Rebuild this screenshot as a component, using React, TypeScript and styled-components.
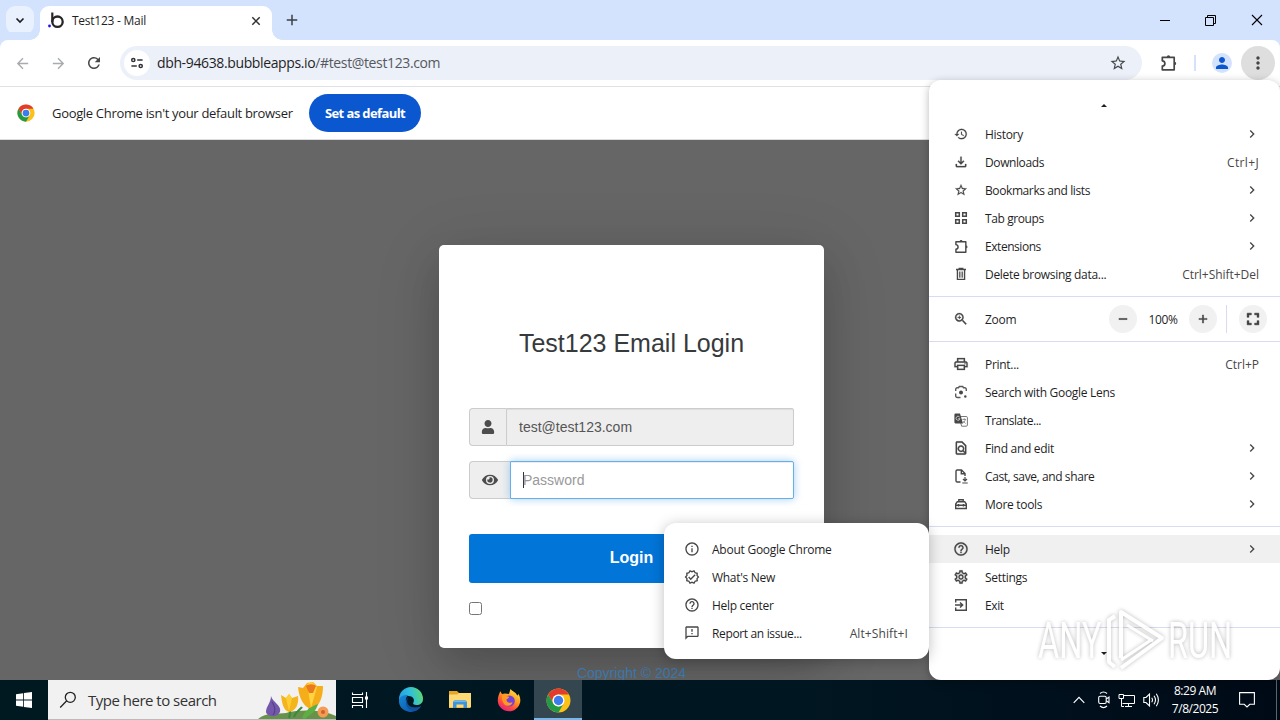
import type { ReactNode } from 'react';
import styled, { createGlobalStyle } from 'styled-components';
import {
    MdAdd,
    MdArrowBack,
    MdArrowForward,
    MdChevronRight,
    MdFullscreen,
    MdHelpOutline,
    MdHistory,
    MdInfoOutline,
    MdMoreVert,
    MdOutlineFeedback,
    MdOutlineFileDownload,
    MdOutlineFindInPage,
    MdOutlinePrint,
    MdOutlineSettings,
    MdOutlineVerified,
    MdPerson,
    MdRefresh,
    MdRemove,
    MdStarBorder,
    MdZoomIn,
} from 'react-icons/md';
import { FaEye, FaUser } from 'react-icons/fa';

type MenuEntry = {
    icon: ReactNode;
    label: string;
    hint?: string;
    sub?: boolean;
    active?: boolean;
    fit?: number;
    hintFit?: number;
};

const ChromeLogo = ({ size }: { size: number }) => (
    <svg width={size} height={size} viewBox='0 0 48 48'>
        <circle cx='24' cy='24' r='23' fill='#fbc116' />
        <path d='M4.1 12.5A23 23 0 0 1 43.9 12.5H24A11.5 11.5 0 0 0 14 29.8Z' fill='#e33b2e' />
        <path d='M4.1 12.5A23 23 0 0 0 24 47L34 29.8A11.5 11.5 0 0 1 14 29.8Z' fill='#229a4c' />
        <circle cx='24' cy='24' r='11.5' fill='#fff' />
        <circle cx='24' cy='24' r='9' fill='#3b7ded' />
    </svg>
);

const BubbleLogo = () => (
    <svg width='17' height='17' viewBox='0 0 17 17'>
        <path d='M4.3 .5V10' stroke='#262626' strokeWidth='2.2' />
        <circle cx='9.5' cy='9.7' r='5.2' fill='none' stroke='#262626' strokeWidth='2.3' />
        <circle cx='1.5' cy='14' r='1.4' fill='#1b12f5' />
    </svg>
);

const SiteInfoIcon = () => (
    <svg width='14' height='14' viewBox='0 0 14 14' fill='none' stroke='#303236' strokeWidth='1.5'>
        <circle cx='3.3' cy='4' r='1.6' />
        <path d='M7.2 4H12.6M1.4 10H6.8' />
        <circle cx='10.7' cy='10' r='1.6' />
    </svg>
);

const GroupsIcon = () => (
    <svg width='14' height='14' viewBox='0 0 14 14' fill='none' stroke='#474747' strokeWidth='1.5'>
        <path d='M1.7 1.7H5.3V5.3H1.7ZM8.7 1.7H12.3V5.3H8.7ZM1.7 8.7H5.3V12.3H1.7ZM8.7 8.7H12.3V12.3H8.7Z' />
    </svg>
);

const LensIcon = () => (
    <svg width='14' height='14' viewBox='0 0 14 14' fill='none' stroke='#5a5a5a' strokeWidth='1.4'>
        <path d='M1.7 6V4.2A1.5 1.5 0 0 1 3.2 2.7H4.5L5.3 1.5H8.7L9.5 2.7H10.8A1.5 1.5 0 0 1 12.3 4.2V6' />
        <path d='M1.7 8.5V11A1.5 1.5 0 0 0 3.2 12.5H6.5' />
        <circle cx='7' cy='7.5' r='2' fill='#474747' stroke='none' />
        <circle cx='11.3' cy='11.5' r='1.2' fill='#474747' stroke='none' />
    </svg>
);

const TranslateIcon = () => (
    <svg width='14' height='14' viewBox='0 0 14 14' fill='none'>
        <path d='M5 3.5H12.2A1.2 1.2 0 0 1 13.4 4.7V12A1.2 1.2 0 0 1 12.2 13.2H7.6Z' stroke='#777' />
        <path d='M1.5 .6H6L9 10.4H1.5A1.1 1.1 0 0 1 .4 9.3V1.7A1.1 1.1 0 0 1 1.5 .6Z' fill='#474747' />
        <path d='M5.6 4A2 2 0 1 0 6 5.7H4.2' stroke='#ccc' strokeWidth='.9' />
        <path d='M8.3 6.4H12M10.3 5.4V6.4M11.3 6.4C11 8.3 10 9.2 9 10M9.3 8L11.5 10.5' stroke='#777' strokeWidth='.8' />
    </svg>
);

const CastSaveIcon = () => (
    <svg width='14' height='15' viewBox='0 0 14 15' fill='none' stroke='#474747' strokeWidth='1.4'>
        <path d='M6.5 13H3.2A1.2 1.2 0 0 1 2 11.8V2.2A1.2 1.2 0 0 1 3.2 1H7.5L11 4.5V7M7.3 1V4.7H11' />
        <path d='M11 8V11.5M9 10L11 12L13 10M8.3 14H13.7' strokeWidth='1.2' />
    </svg>
);

const ToolboxIcon = () => (
    <svg width='14' height='14' viewBox='0 0 14 14' fill='none' stroke='#474747' strokeWidth='1.4'>
        <path d='M1.7 11.5V7L3.3 4.7H10.7L12.3 7V11.5ZM4.8 4.5V2.7H9.2V4.5M1.7 8.3H12.3M4.5 7V9.6M9.5 7V9.6' />
    </svg>
);

const TrashIcon = () => (
    <svg width='14' height='14' viewBox='0 0 14 14' fill='none' stroke='#474747' strokeWidth='1.3'>
        <path d='M2 2.5H12M5.2 2V1.3H8.8V2M3.4 2.8V12.3H10.6V2.8' />
        <path d='M5.4 4.5V10.7M7 4.5V10.7M8.6 4.5V10.7' strokeWidth='.9' />
    </svg>
);

const ExitIcon = () => (
    <svg width='14' height='14' viewBox='0 0 14 14' fill='none' stroke='#474747' strokeWidth='1.4'>
        <path d='M1.7 4.5V1.7H12.3V12.3H1.7V9.5M1 7H8.5M6 4.4L8.7 7L6 9.6' />
    </svg>
);

const PuzzleIcon = ({ size }: { size: number }) => (
    <svg width={size} height={size} viewBox='0 0 18 18' fill='none' stroke='#474747' strokeWidth='1.7'>
        <path d='M2.3 3.3H14.2V15.8H2.3V12.2C4.2 12 4.9 10.8 4.9 9.5S4.2 7 2.3 6.8Z' strokeLinejoin='round' />
        <path d='M6.8 3A1.7 1.7 0 0 1 10.2 3ZM14.5 7.8A1.7 1.7 0 0 1 14.5 11.2Z' fill='#474747' stroke='none' />
    </svg>
);

const Watermark = () => (
    <WatermarkBox>
        <WatermarkWord>ANY</WatermarkWord>
        <svg width='62' height='66' viewBox='0 0 62 66' fill='none' stroke='#fff' strokeWidth='4' strokeLinejoin='round'>
            <path d='M17 50V4L58 30L17 60M11 8L5 12V54L11 59' />
            <path d='M23 17L49 33M47 32L17 52' strokeWidth='3' />
        </svg>
        <WatermarkWord>RUN</WatermarkWord>
    </WatermarkBox>
);

const EdgeIcon = () => (
    <svg width='26' height='26' viewBox='0 0 26 26'>
        <defs>
            <linearGradient id='edgeTop' x1='0' x2='1' y1='.5' y2='.3'>
                <stop offset='0' stopColor='#269fdf' />
                <stop offset='.5' stopColor='#31bfdc' />
                <stop offset='1' stopColor='#60d968' />
            </linearGradient>
            <linearGradient id='edgeLow' x1='0' x2='1' y1='0' y2='1'>
                <stop offset='0' stopColor='#1689d8' />
                <stop offset='1' stopColor='#0a4d9b' />
            </linearGradient>
        </defs>
        <path d='M1 12A12 12 0 0 1 25 12C25 16 22 18 18.5 18C15.5 18 14.5 16.7 15.5 15.3C17 12 14.5 9 10.5 9C6 9 2.5 11 1 15Z' fill='url(#edgeTop)' />
        <path d='M1 13C1.5 9.5 6 7.5 10.5 8C7.5 10 7 14.5 9.5 17.5C12.5 21.5 18 21.7 23 19.3C20 24 15 25.7 10.5 24.7C4.5 23.5 .5 19 1 13Z' fill='url(#edgeLow)' />
        <path d='M11 9.5C8.5 12 8.5 16 11 18.5C14 21 19 21 23 19.3C22 21 20.5 22.5 19 23.3C14 24.5 9 22 8 17C7.5 14 8.5 11 11 9.5Z' fill='#0e509d' />
    </svg>
);

const FolderIcon = () => (
    <svg width='22' height='20' viewBox='0 0 22 20'>
        <path d='M0 1H8L10 3H21V18H0Z' fill='#eba526' />
        <path d='M0 4.5H8L10 3H22V17.5H0Z' fill='#ffd973' />
        <path d='M4 18V11.5H18V18H14.5V14.5H7.5V18Z' fill='#3d93dc' />
        <path d='M4 11.5L5.5 10H16.5L18 11.5Z' fill='#62b5ec' />
    </svg>
);

const FirefoxIcon = () => (
    <svg width='24' height='24' viewBox='0 0 24 24'>
        <defs>
            <linearGradient id='fox' x1='.8' x2='.2' y1='0' y2='1'>
                <stop offset='0' stopColor='#ffe84a' />
                <stop offset='.4' stopColor='#ff9c1f' />
                <stop offset='.7' stopColor='#ff4a3d' />
                <stop offset='1' stopColor='#e3178e' />
            </linearGradient>
        </defs>
        <path d='M3.2 3.2L5 6L8 5.5L12 6L13.5 1C15 3.2 18.5 4 20 7C21 8 21.4 7 21 5.5C23 8 23.6 11 23.2 14C22 20 17 23.4 12 23.3C6 23.2 1.2 19 .8 13C.6 9 2 6.5 3.2 3.2Z' fill='url(#fox)' />
        <circle cx='12.3' cy='13' r='5.5' fill='#7542d8' />
        <path d='M5 7.5C8 6.5 9.3 8.5 11.5 8.5C13 9 11 11 9.3 11.5C9.5 14.5 13 15.5 15.5 14.3C15 17.5 11.5 18.5 9 17.5C6 16 4.5 12 5 7.5Z' fill='#ff9825' />
    </svg>
);

const Flowers = () => (
    <svg width='78' height='39' viewBox='0 0 78 39'>
        <path d='M0 39C8 32 20 34 28 33C44 29 65 30 78 36V39Z' fill='#68924c' />
        <path d='M31 38C33 33 32 29 31 25M49 37C53 30 52 26 52 21M36 37C38 31 42 30 44 27' stroke='#3c8a3d' strokeWidth='2.2' fill='none' />
        <path d='M13 16C14 22 24 25 22 32C19 38 9 37 8 32C8 26 13 23 13 16Z' fill='#7357ab' />
        <path d='M14 22C17 27 18 31 15 35' stroke='#4f3982' fill='none' />
        <path d='M23 15L28 18L31 14L34 18L40 16C41 24 38 31 31 32C25 30 24 23 23 15Z' fill='#f4b51c' />
        <path d='M28 18L31 31L34 18L31 14Z' fill='#ffce35' />
        <path d='M40 7L45 8L49 3L55 2L59 6L65 6C65 18 61 27 54 29C46 28 41 18 40 7Z' fill='#f5ad19' />
        <path d='M49 4L53 28L59 7L54 2Z' fill='#ffd43e' />
        <path d='M48 6A6 4 0 0 1 58 6L55 13H51Z' fill='#eb791d' />
        <circle cx='65' cy='32' r='5.5' fill='#f59b55' />
        <circle cx='65' cy='32' r='2' fill='#cb6428' />
        <path d='M44 38C47 29 55 26 60 24C58 32 52 35 47 39Z' fill='#5eae43' />
    </svg>
);

const historyItems: MenuEntry[] = [
    { icon: <MdHistory size={14} />, label: 'History', sub: true },
    { icon: <MdOutlineFileDownload size={16} />, label: 'Downloads', hint: 'Ctrl+J', fit: -0.4, hintFit: 0.35 },
    { icon: <MdStarBorder size={14} />, label: 'Bookmarks and lists', sub: true, fit: -0.4 },
    { icon: <GroupsIcon />, label: 'Tab groups', sub: true, fit: -0.4 },
    { icon: <PuzzleIcon size={15} />, label: 'Extensions', sub: true, fit: -0.45 },
    { icon: <TrashIcon />, label: 'Delete browsing data...', hint: 'Ctrl+Shift+Del', hintFit: -0.03 },
];

const toolItems: MenuEntry[] = [
    { icon: <MdOutlinePrint size={16} />, label: 'Print...', hint: 'Ctrl+P', hintFit: 0 },
    { icon: <LensIcon />, label: 'Search with Google Lens' },
    { icon: <TranslateIcon />, label: 'Translate...', fit: -0.45 },
    { icon: <MdOutlineFindInPage size={16} />, label: 'Find and edit', sub: true },
    { icon: <CastSaveIcon />, label: 'Cast, save, and share', sub: true, fit: -0.4 },
    { icon: <ToolboxIcon />, label: 'More tools', sub: true },
];

const appItems: MenuEntry[] = [
    { icon: <MdHelpOutline size={16} />, label: 'Help', sub: true, active: true },
    { icon: <MdOutlineSettings size={16} />, label: 'Settings' },
    { icon: <ExitIcon />, label: 'Exit', fit: -0.4 },
];

const helpItems: MenuEntry[] = [
    { icon: <MdInfoOutline size={16} />, label: 'About Google Chrome', fit: -0.25 },
    { icon: <MdOutlineVerified size={16} />, label: "What's New" },
    { icon: <MdHelpOutline size={16} />, label: 'Help center' },
    { icon: <MdOutlineFeedback size={16} />, label: 'Report an issue...', hint: 'Alt+Shift+I', fit: -0.35, hintFit: 0.1 },
];

const MenuRows = ({ items }: { items: MenuEntry[] }) => (
    <>
        {items.map((item) => (
            <MenuRow key={item.label} $active={item.active}>
                <MenuIcon>{item.icon}</MenuIcon>
                <MenuLabel $fit={item.fit}>{item.label}</MenuLabel>
                {item.hint && <MenuHint $fit={item.hintFit}>{item.hint}</MenuHint>}
                {item.sub && <MenuArrow size={16} />}
            </MenuRow>
        ))}
    </>
);

const App = () => (
    <Screen>
        <GlobalStyle />
        <TabStrip>
            <TabSearch>
                <svg width='10' height='7' viewBox='0 0 10 7'>
                    <path d='M1.5 1.5L5 5L8.5 1.5' fill='none' stroke='#1f1f1f' strokeWidth='1.7' />
                </svg>
            </TabSearch>
            <Tab>
                <BubbleLogo />
                <TabTitle>Test123 - Mail</TabTitle>
                <svg width='10' height='10' viewBox='0 0 10 10'>
                    <path d='M1.3 1.3L8.7 8.7M8.7 1.3L1.3 8.7' stroke='#303030' strokeWidth='1.5' />
                </svg>
            </Tab>
            <NewTab>
                <MdAdd size={18} />
            </NewTab>
            <WindowControls>
                <svg width='11' height='11' viewBox='0 0 11 11'>
                    <path d='M1 5.5H11' stroke='#000' />
                </svg>
                <svg width='11' height='11' viewBox='0 0 11 11' fill='none' stroke='#000'>
                    <path d='M.5 2.5H8.5V10.5H.5ZM2.5 2.5V.5H10.5V8.5H8.5' />
                </svg>
                <svg width='12' height='12' viewBox='0 0 12 12'>
                    <path d='M1 1L11 11M11 1L1 11' stroke='#000' strokeWidth='1.1' />
                </svg>
            </WindowControls>
        </TabStrip>
        <Toolbar>
            <NavButton $dim><MdArrowBack size={17} /></NavButton>
            <NavButton $dim><MdArrowForward size={17} /></NavButton>
            <NavButton><MdRefresh size={18} /></NavButton>
            <AddressBar>
                <SiteInfo><SiteInfoIcon /></SiteInfo>
                <Url>dbh-94638.bubbleapps.io<span>/#test@test123.com</span></Url>
                <MdStarBorder size={18} />
            </AddressBar>
            <ToolbarEnd>
                <PuzzleIcon size={18} />
                <Divider />
                <Avatar><MdPerson size={18} /></Avatar>
                <MoreButton><MdMoreVert size={20} /></MoreButton>
            </ToolbarEnd>
        </Toolbar>
        <InfoBar>
            <ChromeLogo size={18} />
            <InfoText>Google Chrome isn't your default browser</InfoText>
            <DefaultButton>Set as default</DefaultButton>
        </InfoBar>
        <Page>
            <LoginCard>
                <LoginTitle>Test123 Email Login</LoginTitle>
                <InputGroup>
                    <Addon $width={37}><FaUser size={14} /></Addon>
                    <Field>test@test123.com</Field>
                </InputGroup>
                <InputGroup>
                    <Addon $width={41}><FaEye size={16} /></Addon>
                    <Field $focused><Caret />Password</Field>
                </InputGroup>
                <LoginButton>Login</LoginButton>
                <CheckBox />
            </LoginCard>
            <Copyright>Copyright © 2024</Copyright>
        </Page>
        <TaskBar>
            <StartButton>
                <svg width='16' height='16' viewBox='0 0 16 16' fill='#fff'>
                    <path d='M0 2.2L7.2 1.2V7.5H0ZM8 1.1L16 0V7.5H8ZM0 8.4H7.2V14.8L0 13.8ZM8 8.4H16V16L8 14.9Z' />
                </svg>
            </StartButton>
            <SearchBox>
                <svg width='18' height='18' viewBox='0 0 18 18' fill='none' stroke='#222' strokeWidth='1.3'>
                    <circle cx='11.3' cy='6.3' r='5' />
                    <path d='M7.7 9.8L1.2 16.5' />
                </svg>
                <SearchText>Type here to search</SearchText>
                <Flowers />
            </SearchBox>
            <TaskButton $gap={3}>
                <svg width='18' height='18' viewBox='0 0 18 18' fill='none' stroke='#fff' strokeWidth='1.1'>
                    <path d='M1.5 1.5V3.5H11.5V1.5M1.5 6.5H11.5V11.5H1.5ZM1.5 17V14.5H11.5V17M15.5 1V17' />
                    <path d='M14 5.5H17V8.5H14Z' fill='#fff' stroke='none' />
                </svg>
            </TaskButton>
            <TaskButton><EdgeIcon /></TaskButton>
            <TaskButton><FolderIcon /></TaskButton>
            <TaskButton><FirefoxIcon /></TaskButton>
            <TaskButton $active><ChromeLogo size={25} /></TaskButton>
            <Tray>
                <svg width='12' height='8' viewBox='0 0 12 8' fill='none' stroke='#fff' strokeWidth='1.2'>
                    <path d='M.7 6.8L6 1.4L11.3 6.8' />
                </svg>
                <TrayGroup>
                    <svg width='12' height='18' viewBox='0 0 12 18' fill='none' stroke='#fff' strokeWidth='1.1'>
                        <path d='M2 2.5C4 .8 7 .8 9 2.5M2 15C4 16.8 7 16.8 9 15' />
                        <rect x='.7' y='5.2' width='7.5' height='7.3' rx='1.4' />
                        <path d='M8.3 8L11 6V11.7L8.3 9.8' />
                    </svg>
                    <svg width='17' height='15' viewBox='0 0 17 15' fill='none' stroke='#fff'>
                        <path d='M5.5 2.5H16.5V10.5H4.5M10.5 10.5V13.5M7 13.5H14M1 1.5H5.5V5.5H1ZM3.5 5.5V13.5H6' />
                    </svg>
                    <svg width='17' height='16' viewBox='0 0 17 16' fill='none' stroke='#fff' strokeWidth='1.1'>
                        <path d='M.8 5.5H3L6.5 2V14L3 10.5H.8ZM8.7 5.8Q10.3 8 8.7 10.2M11 3.8Q14 8 11 12.2M13.3 1.8Q17.5 8 13.3 14.2' />
                    </svg>
                </TrayGroup>
            </Tray>
            <Clock>
                <span>8:29 AM</span>
                <span>7/8/2025</span>
            </Clock>
            <Notifications>
                <svg width='16' height='16' viewBox='0 0 16 16' fill='none' stroke='#fff' strokeWidth='1.1'>
                    <path d='M.6 .6H15.4V12.3H10.8L8 15L5.2 12.3H.6Z' />
                </svg>
            </Notifications>
        </TaskBar>

        <MainMenu>
            <ScrollHint $top>
                <svg width='6' height='3' viewBox='0 0 6 3'><path d='M0 3L3 0L6 3Z' fill='#1f1f1f' /></svg>
            </ScrollHint>
            <MenuRows items={historyItems} />
            <Separator />
            <MenuRow>
                <MenuIcon><MdZoomIn size={16} /></MenuIcon>
                <MenuLabel>Zoom</MenuLabel>
                <ZoomControls>
                    <RoundButton><MdRemove size={14} /></RoundButton>
                    <ZoomValue>100%</ZoomValue>
                    <RoundButton><MdAdd size={14} /></RoundButton>
                    <ZoomDivider />
                    <RoundButton><MdFullscreen size={20} /></RoundButton>
                </ZoomControls>
            </MenuRow>
            <Separator />
            <MenuRows items={toolItems} />
            <Separator />
            <MenuRows items={appItems} />
            <Separator />
            <ScrollHint>
                <svg width='6' height='3' viewBox='0 0 6 3'><path d='M0 0L3 3L6 0Z' fill='#1f1f1f' /></svg>
            </ScrollHint>
        </MainMenu>
        <HelpMenu>
            <MenuRows items={helpItems} />
        </HelpMenu>
        <Watermark />
    </Screen>
);

export default App;

const GlobalStyle = createGlobalStyle`
    * {
        box-sizing: border-box;
    }
    body {
        margin: 0;
        overflow: hidden;
    }
    svg {
        display: block;
        flex-shrink: 0;
    }
`;

const Screen = styled.div`
    position: relative;
    display: flex;
    flex-direction: column;
    width: 1280px;
    height: 720px;
    overflow: hidden;
    font-family: 'Open Sans', 'Noto Sans', sans-serif;
    font-size: 12px;
    color: #1f1f1f;
    white-space: nowrap;
`;

const TabStrip = styled.div`
    display: flex;
    height: 40px;
    flex-shrink: 0;
    padding: 6px 0 0 6px;
    background: #d3e2fd;
`;

const TabSearch = styled.div`
    display: flex;
    align-items: center;
    justify-content: center;
    width: 28px;
    height: 28px;
    border-radius: 9px;
    background: #e9f0fe;
`;

const Tab = styled.div`
    position: relative;
    display: flex;
    align-items: center;
    width: 232px;
    height: 34px;
    margin-left: 6px;
    padding: 0 11px 5px 8px;
    border-radius: 9px 9px 0 0;
    background: #fff;

    &::before,
    &::after {
        content: '';
        position: absolute;
        bottom: 0;
        width: 10px;
        height: 10px;
    }
    &::before {
        left: -10px;
        background: radial-gradient(circle at 0 0, transparent 9.5px, #fff 10px);
    }
    &::after {
        right: -10px;
        background: radial-gradient(circle at 100% 0, transparent 9.5px, #fff 10px);
    }
`;

const TabTitle = styled.span`
    flex: 1;
    margin-left: 7px;
    letter-spacing: -0.25px;
`;

const NewTab = styled.div`
    display: flex;
    align-items: center;
    height: 28px;
    margin-left: 11px;
    color: #3c4043;
`;

const WindowControls = styled.div`
    display: flex;
    align-items: center;
    gap: 35px;
    height: 28px;
    margin: 0 17px 0 auto;
`;

const Toolbar = styled.div`
    display: flex;
    align-items: center;
    height: 47px;
    flex-shrink: 0;
    padding: 0 5px 0 8px;
    border-bottom: 1px solid #dfe1e5;
    border-radius: 8px 8px 0 0;
    background: #fff;
    box-shadow: 0 -8px #d3e2fd;
`;

const NavButton = styled.div<{ $dim?: boolean }>`
    display: flex;
    align-items: center;
    justify-content: center;
    width: 28px;
    margin-right: 8px;
    color: ${({ $dim }) => ($dim ? '#a9abae' : '#46484b')};
`;

const AddressBar = styled.div`
    display: flex;
    align-items: center;
    flex: 1;
    height: 34px;
    margin-left: 4px;
    padding: 0 15px 0 4px;
    border-radius: 17px;
    background: #ecf0f9;
    color: #46484b;
`;

const SiteInfo = styled.div`
    display: flex;
    align-items: center;
    justify-content: center;
    width: 26px;
    height: 26px;
    border-radius: 50%;
    background: #fff;
`;

const Url = styled.div`
    flex: 1;
    margin-left: 7px;
    padding-bottom: 1px;
    font-size: 14px;
    letter-spacing: -0.37px;
    color: #1f1f1f;

    span {
        color: #55585d;
    }
`;

const ToolbarEnd = styled.div`
    display: flex;
    align-items: center;
    margin-left: 18px;
`;

const Divider = styled.div`
    width: 2px;
    height: 16px;
    margin: 0 16px;
    background: #d5e2f8;
`;

const Avatar = styled.div`
    display: flex;
    align-items: center;
    justify-content: center;
    width: 20px;
    height: 20px;
    border-radius: 50%;
    background: #d3e3fd;
    color: #0b57d0;
`;

const MoreButton = styled.div`
    display: flex;
    align-items: center;
    justify-content: center;
    width: 34px;
    height: 34px;
    margin-left: 9px;
    border-radius: 50%;
    background: #dedede;
    color: #444;
`;

const InfoBar = styled.div`
    display: flex;
    align-items: center;
    height: 53px;
    flex-shrink: 0;
    padding-left: 17px;
    border-bottom: 1px solid #dadce0;
    background: #fff;
`;

const InfoText = styled.span`
    width: 241px;
    margin-left: 17px;
    font-size: 13px;
    letter-spacing: -0.32px;
`;

const DefaultButton = styled.div`
    width: 112px;
    height: 38px;
    margin-left: 16px;
    border-radius: 19px;
    background: #0b57d0;
    color: #fff;
    font-size: 13px;
    font-weight: 700;
    line-height: 38px;
    text-align: center;
    letter-spacing: -0.6px;
`;

const Page = styled.div`
    flex: 1;
    min-height: 0;
    overflow: hidden;
    background: #666;
    font-family: 'Liberation Sans', Arial, sans-serif;
`;

const LoginCard = styled.div`
    display: flex;
    flex-direction: column;
    width: 385px;
    height: 403px;
    margin: 105px 0 0 439px;
    padding: 84px 30px 0;
    border-radius: 5px;
    background: #fff;
    box-shadow: 0 19px 38px rgba(0, 0, 0, 0.15), 0 10px 70px rgba(0, 0, 0, 0.12);
`;

const LoginTitle = styled.div`
    height: 79px;
    font-size: 25px;
    line-height: 29px;
    text-align: center;
    color: #373a3c;
`;

const InputGroup = styled.div`
    display: flex;
    height: 38px;
    margin-bottom: 15px;
`;

const Addon = styled.div<{ $width: number }>`
    display: flex;
    align-items: center;
    justify-content: center;
    width: ${({ $width }) => $width}px;
    border: 1px solid #ccc;
    border-right: 0;
    border-radius: 4px 0 0 4px;
    background: #eee;
    color: #4d4d4d;
`;

const Field = styled.div<{ $focused?: boolean }>`
    display: flex;
    align-items: center;
    flex: 1;
    padding-left: 12px;
    border: 1px solid ${({ $focused }) => ($focused ? '#66afe9' : '#ccc')};
    border-radius: 0 2px 2px 0;
    background: ${({ $focused }) => ($focused ? '#fff' : '#eee')};
    box-shadow: ${({ $focused }) =>
        $focused
            ? 'inset 0 1px 1px rgba(0, 0, 0, 0.075), 0 0 8px rgba(102, 175, 233, 0.6)'
            : 'inset 0 1px 1px rgba(0, 0, 0, 0.075)'};
    font-size: 14px;
    color: ${({ $focused }) => ($focused ? '#999' : '#555')};
`;

const Caret = styled.span`
    width: 1px;
    height: 16px;
    margin-right: -1px;
    background: #333;
`;

const LoginButton = styled.div`
    height: 49px;
    margin-top: 20px;
    border-radius: 3px;
    background: #0275d8;
    color: #fff;
    font-size: 16px;
    font-weight: 700;
    line-height: 47px;
    text-align: center;
`;

const CheckBox = styled.div`
    width: 13px;
    height: 13px;
    margin-top: 19px;
    border: 1px solid #767676;
    border-radius: 2.5px;
    background: #fff;
`;

const Copyright = styled.div`
    width: 385px;
    margin: 17px 0 0 439px;
    font-size: 14px;
    line-height: 16px;
    text-align: center;
    color: #3b76a8;
`;

const TaskBar = styled.div`
    display: flex;
    height: 40px;
    flex-shrink: 0;
    background: linear-gradient(90deg, #001820, #001722 60%, #000a17);
`;

const StartButton = styled.div`
    display: flex;
    align-items: center;
    justify-content: center;
    width: 48px;
`;

const SearchBox = styled.div`
    display: flex;
    align-items: center;
    width: 288px;
    padding-left: 11px;
    border-bottom: 1px solid #bbb;
    background: #f1f1f1;
`;

const SearchText = styled.span`
    flex: 1;
    margin-left: 11px;
    font-size: 15px;
    letter-spacing: -0.5px;
    color: #333;
`;

const TaskButton = styled.div<{ $active?: boolean; $gap?: number }>`
    display: flex;
    align-items: center;
    justify-content: center;
    width: 48px;
    margin-right: ${({ $gap = 1 }) => $gap}px;
    background: ${({ $active }) => ($active ? '#34464f' : 'transparent')};
    box-shadow: ${({ $active }) => ($active ? 'inset 0 -2px #76b9ed' : 'none')};
`;

const Tray = styled.div`
    display: flex;
    align-items: center;
    gap: 13px;
    margin-left: auto;
`;

const TrayGroup = styled.div`
    display: flex;
    align-items: center;
    gap: 8px;
`;

const Clock = styled.div`
    display: flex;
    flex-direction: column;
    align-items: center;
    justify-content: center;
    width: 50px;
    margin-left: 10px;
    color: #fff;
    font-size: 12px;
    line-height: 18px;
    letter-spacing: -0.45px;
`;

const Notifications = styled.div`
    display: flex;
    align-items: center;
    width: 57px;
    margin-right: 3px;
    padding-left: 19px;
    border-right: 1px solid #59646b;
`;

const MainMenu = styled.div`
    position: absolute;
    left: 929px;
    top: 80px;
    width: 351px;
    height: 600px;
    padding: 0 0 0 24px;
    border-radius: 12px;
    background: #fff;
    box-shadow: 0 2px 9px rgba(0, 0, 0, 0.28);
    overflow: hidden;
`;

const HelpMenu = styled.div`
    position: absolute;
    left: 664px;
    top: 523px;
    width: 265px;
    height: 136px;
    padding: 12px 0 12px 20px;
    border-radius: 12px;
    background: #fff;
    box-shadow: 0 2px 14px rgba(0, 0, 0, 0.25);
    overflow: hidden;
`;

const ScrollHint = styled.div<{ $top?: boolean }>`
    display: flex;
    align-items: center;
    justify-content: center;
    height: ${({ $top }) => ($top ? 40 : 34)}px;
    padding: ${({ $top }) => ($top ? '11px 25px 0 0' : '0 25px 0 0')};
`;

const MenuRow = styled.div<{ $active?: boolean }>`
    display: flex;
    align-items: center;
    height: 28px;
    margin-left: -24px;
    padding: 0 21px 0 24px;
    background: ${({ $active }) => ($active ? '#f0f0f0' : 'transparent')};

    ${HelpMenu} & {
        margin-left: -20px;
        padding-left: 20px;
    }
`;

const MenuIcon = styled.span`
    display: flex;
    align-items: center;
    justify-content: center;
    width: 16px;
    height: 16px;
    margin-right: 16px;
    color: #474747;

    ${MainMenu} & svg[stroke-width='0'] path:not([fill='none']) {
        stroke-width: 0.35;
    }

    ${HelpMenu} & {
        margin-right: 12px;
    }
`;

const MenuLabel = styled.span<{ $fit?: number }>`
    flex: 1;
    padding-top: 1px;
    letter-spacing: ${({ $fit = -0.3 }) => $fit}px;
`;

const MenuHint = styled.span<{ $fit?: number }>`
    padding-top: 1px;
    letter-spacing: ${({ $fit = -0.2 }) => $fit}px;
    color: #474747;
`;

const MenuArrow = styled(MdChevronRight)`
    color: #474747;
    margin-right: -1px;
`;

const Separator = styled.div`
    height: 1px;
    margin: 8px 0 8px -24px;
    background: #d9dbf0;
`;

const ZoomControls = styled.div`
    display: flex;
    align-items: center;
    margin-right: -8px;
`;

const RoundButton = styled.div`
    display: flex;
    align-items: center;
    justify-content: center;
    width: 28px;
    height: 28px;
    border-radius: 50%;
    background: #f1f1f1;
    color: #333;

    path:not([fill='none']) {
        stroke-width: 0.6;
    }
`;

const ZoomValue = styled.span`
    width: 52px;
    text-align: center;
    letter-spacing: -0.35px;
`;

const ZoomDivider = styled.div`
    width: 1px;
    height: 28px;
    margin: 0 12px 0 9px;
    background: #d9dbf0;
`;

const WatermarkBox = styled.div`
    position: absolute;
    left: 1038px;
    top: 608px;
    display: flex;
    align-items: center;
    gap: 2px;
    opacity: 0.85;
    filter: drop-shadow(0 0 2px rgba(0, 0, 0, 0.32));
`;

const WatermarkWord = styled.span`
    display: block;
    width: 64px;
    font-family: Roboto, sans-serif;
    font-size: 50px;
    font-weight: 400;
    line-height: 66px;
    color: #fff;
    transform: scaleX(0.65);
    transform-origin: 0 50%;
`;
